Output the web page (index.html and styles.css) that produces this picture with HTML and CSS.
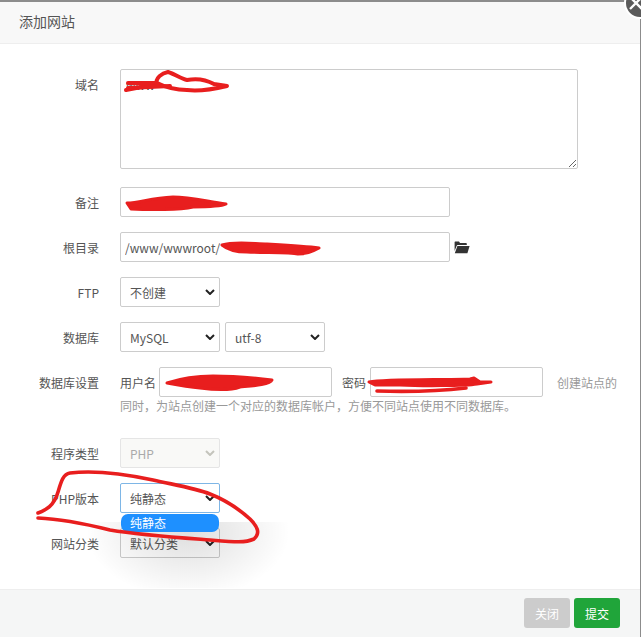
FILE: index.html
```html
<!DOCTYPE html>
<html lang="zh-CN">
<head>
<meta charset="utf-8">
<title>添加网站</title>
<link rel="stylesheet" href="styles.css">
</head>
<body>
<div class="modal">
  <header class="modal-head">添加网站</header>
  <form class="modal-body">
    <div class="row row-area">
      <label class="lab">域名</label>
      <textarea class="ctl area">www</textarea>
    </div>
    <div class="row">
      <label class="lab">备注</label>
      <input class="ctl wide" type="text">
    </div>
    <div class="row">
      <label class="lab">根目录</label>
      <input class="ctl wide" type="text" value="/www/wwwroot/">
      <svg class="folder" viewBox="0 0 16 13" aria-hidden="true"><path d="M0.6 3 L0.6 1.2 Q0.6 0.6 1.2 0.6 L5 0.6 L6 2 L12 2 Q12.8 2 12.8 2.8 L12.8 4 L3.6 4 Q3 4 2.8 4.5 L0.6 10 Z M3.4 5 L15.6 5 L13.4 12.2 L0.8 12.2 Z" fill="#333"/></svg>
    </div>
    <div class="row">
      <label class="lab">FTP</label>
      <span class="sel"><select class="ctl"><option>不创建</option></select><svg class="chev" viewBox="0 0 10 6"><path d="M1 1 L5 5 L9 1" /></svg></span>
    </div>
    <div class="row">
      <label class="lab">数据库</label>
      <span class="sel"><select class="ctl"><option>MySQL</option></select><svg class="chev" viewBox="0 0 10 6"><path d="M1 1 L5 5 L9 1" /></svg></span>
      <span class="sel"><select class="ctl"><option>utf-8</option></select><svg class="chev" viewBox="0 0 10 6"><path d="M1 1 L5 5 L9 1" /></svg></span>
    </div>
    <div class="row row-db">
      <label class="lab">数据库设置</label>
      <div class="db-flow">
        <span class="db-lab">用户名</span><input class="ctl db-in" type="text"><span class="db-lab db-lab2">密码</span><input class="ctl db-in" type="text"><span class="hint">创建站点的同时，为站点创建一个对应的数据库帐户，方便不同站点使用不同数据库。</span>
      </div>
    </div>
    <div class="row">
      <label class="lab">程序类型</label>
      <span class="sel off"><select class="ctl" disabled><option>PHP</option></select><svg class="chev" viewBox="0 0 10 6"><path d="M1 1 L5 5 L9 1" /></svg></span>
    </div>
    <div class="row">
      <label class="lab">PHP版本</label>
      <span class="sel"><select class="ctl focus"><option>纯静态</option></select><svg class="chev" viewBox="0 0 10 6"><path d="M1 1 L5 5 L9 1" /></svg><span class="shade"></span><span class="popup">纯静态</span></span>
    </div>
    <div class="row">
      <label class="lab">网站分类</label>
      <span class="sel"><select class="ctl"><option>默认分类</option></select><svg class="chev" viewBox="0 0 10 6"><path d="M1 1 L5 5 L9 1" /></svg></span>
    </div>
  </form>
  <footer class="modal-foot">
    <button class="btn btn-close" type="button">关闭</button>
    <button class="btn btn-ok" type="button">提交</button>
  </footer>
</div>
<span class="close-x"><svg viewBox="0 0 28 28"><path d="M4 8 L16 20 M16 8 L4 20"/></svg></span>
<svg class="scribble" viewBox="0 0 641 637" aria-hidden="true">
  <path class="t4" d="M126 90 L157 84 C155 78 162 73 168 72 C175 74 181 79 187 80 C197 78 205 79 214 84 L227 86 C210 90 195 91 187 90 C175 90 165 87 157 83 L128 83"/>
  <path class="t5" d="M128 88 L170 86"/>
  <path class="blob" d="M127 203 C140 203 150 198 173 197 C190 197 205 201 226 204 C220 207 205 207 193 207 C180 210 150 210 131 209 Z"/>
  <path class="blob" d="M222 245 C235 241 255 244 267 244 C285 245 305 246 319 248 C312 252 305 254 298 254 C290 252 260 253 247 252 C235 252 228 250 222 245 Z"/>
  <path class="blob" d="M167 383 C185 377 200 376 213 376 C235 376 255 378 272 380 C270 385 250 386 240 387 C232 390 215 390 200 388 C190 387 178 385 167 383 Z"/>
  <path class="blob" d="M369 382 C385 379 440 380 470 379 L474 378 L480 382 L491 382 L477 384 C465 386 420 386 400 385 C390 385 380 385 375 385 Z"/>
  <path class="t3" d="M377 391 C410 392 440 391 466 388"/>
  <path class="t3" d="M38 513 C46 510 54 506 58 492 C61 482 63 474 70 473 C95 470 125 474 153 480 C175 485 195 488 210 494 C228 501 240 510 250 519 C257 526 261 533 254 539 C245 543 235 542 210 540 C170 537 140 535 110 530 C90 525 65 519 38 518"/>
</svg>
</body>
</html>
```
FILE: styles.css
```css
* { box-sizing: border-box; }
html, body { margin: 0; padding: 0; }
body {
  width: 641px;
  height: 637px;
  overflow: hidden;
  position: relative;
  background: #8c8c8c;
  padding-top: 2px;
  font-family: "Noto Sans CJK SC", "Noto Sans", sans-serif;
  font-size: 12px;
  color: #555;
}
.modal {
  width: 640px;
  height: 635px;
  background: #fff;
  display: flex;
  flex-direction: column;
}
.modal-head {
  height: 42px;
  flex: none;
  background: #f8f8f8;
  border-bottom: 1px solid #eee;
  padding-left: 19px;
  font-size: 14px;
  line-height: 39px;
  color: #555;
}
.modal-body {
  flex: 1;
  padding-top: 25px;
}
.row {
  display: flex;
  align-items: flex-start;
  margin-bottom: 15px;
}
.row-area { margin-bottom: 18px; }
.lab {
  width: 99px;
  height: 30px;
  margin-right: 21px;
  flex: none;
  text-align: right;
  line-height: 32px;
  color: #555;
}
.ctl {
  height: 30px;
  border: 1px solid #ccc;
  border-radius: 2px;
  background: #fff;
  font: inherit;
  color: #555;
  outline: none;
}
.area {
  display: block;
  width: 458px;
  height: 100px;
  padding: 6px 5px;
  line-height: 18px;
}
.wide { width: 330px; padding: 0 4px; }
.folder { width: 16px; height: 13px; margin: 9px 0 0 4px; }
.sel {
  position: relative;
  display: block;
  width: 100px;
  height: 30px;
  margin-right: 5px;
}
.sel select {
  width: 100px;
  appearance: none;
  padding: 0 0 0 9px;
}
.chev {
  position: absolute;
  right: 5px;
  top: 12px;
  width: 10px;
  height: 6px;
  fill: none;
  stroke: #222;
  stroke-width: 2;
}
.off select { background: #f9f9f7; border-color: #e5e5e5; color: #aaa; opacity: 1; }
.off .chev { stroke: #c4c4bc; }
.focus { border-color: #7eb6e6; }
.popup {
  position: absolute;
  left: 1px;
  top: 31px;
  width: 98px;
  height: 18px;
  border-radius: 7px;
  background: #1e90ff;
  color: #fff;
  line-height: 18px;
  padding-left: 9px;
  z-index: 2;
}
.shade {
  position: absolute;
  left: -34px;
  top: 39px;
  width: 204px;
  height: 66px;
  background: radial-gradient(ellipse 50% 100% at 50% 15%, rgba(0, 0, 0, .13), rgba(0, 0, 0, .06) 55%, rgba(0, 0, 0, 0));
  z-index: 1;
}
.row-db { margin-bottom: 23px; }
.db-flow {
  width: 505px;
  line-height: 18px;
}
.db-in { width: 173px; padding: 0 5px; margin-left: 3px; }
.db-lab { color: #555; }
.db-lab2 { margin-left: 10px; margin-right: 1px; }
.hint { color: #999; margin-left: 14px; }
.modal-foot {
  height: 48px;
  flex: none;
  background: #f5f6f6;
  border-top: 1px solid #eee;
  display: flex;
  justify-content: flex-end;
  gap: 4px;
  padding: 8px 20px 0 0;
}
.btn {
  width: 46px;
  height: 30px;
  border: 0;
  border-radius: 3px;
  color: #fff;
  font: inherit;
  padding: 0;
}
.btn-close { background: #ccc; }
.btn-ok { background: #20a53a; }
.close-x {
  position: absolute;
  left: 626px;
  top: -11px;
  width: 28px;
  height: 28px;
  border-radius: 50%;
  background: #5b5b5b;
  box-shadow: 0 0 0 2px #fff;
  display: block;
}
.close-x svg { display: block; width: 28px; height: 28px; fill: none; stroke: #fff; stroke-width: 2.4; }
.scribble {
  position: absolute;
  left: 0;
  top: 0;
  width: 641px;
  height: 637px;
  pointer-events: none;
  z-index: 5;
}
.scribble path { fill: none; stroke: #e81e1e; stroke-linecap: round; stroke-linejoin: round; }
.scribble .blob { fill: #e81e1e; stroke-width: 3; }
.t3 { stroke-width: 3.6; }
.t4 { stroke-width: 4; }
.t5 { stroke-width: 4; }
```
